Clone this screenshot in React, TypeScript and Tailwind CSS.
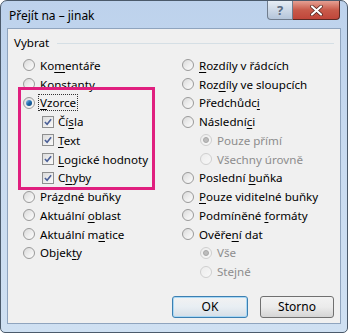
import React from "react";

type Item = {
  label: string;
  key?: number; // index of underlined letter
  kind: "radio" | "check";
  checked?: boolean;
  disabled?: boolean;
  indent?: boolean;
  focus?: boolean;
};

const leftItems: Item[] = [
  { label: "Komentáře", key: 2, kind: "radio" },
  { label: "Konstanty", kind: "radio" },
  { label: "Vzorce", key: 0, kind: "radio", checked: true, focus: true },
  { label: "Čísla", key: 2, kind: "check", checked: true, indent: true },
  { label: "Text", key: 0, kind: "check", checked: true, indent: true },
  { label: "Logické hodnoty", key: 0, kind: "check", checked: true, indent: true },
  { label: "Chyby", key: 1, kind: "check", checked: true, indent: true },
  { label: "Prázdné buňky", key: 3, kind: "radio" },
  { label: "Aktuální oblast", key: 9, kind: "radio" },
  { label: "Aktuální matice", key: 10, kind: "radio" },
  { label: "Objekty", key: 5, kind: "radio" },
];

const rightItems: Item[] = [
  { label: "Rozdíly v řádcích", key: 0, kind: "radio" },
  { label: "Rozdíly ve sloupcích", key: 3, kind: "radio" },
  { label: "Předchůdci", key: 9, kind: "radio" },
  { label: "Následníci", key: 8, kind: "radio" },
  { label: "Pouze přímí", kind: "radio", checked: true, disabled: true, indent: true },
  { label: "Všechny úrovně", kind: "radio", disabled: true, indent: true },
  { label: "Poslední buňka", key: 9, kind: "radio" },
  { label: "Pouze viditelné buňky", key: 0, kind: "radio" },
  { label: "Podmíněné formáty", key: 10, kind: "radio" },
  { label: "Ověření dat", key: 5, kind: "radio" },
  { label: "Vše", kind: "radio", checked: true, disabled: true, indent: true },
  { label: "Stejné", kind: "radio", disabled: true, indent: true },
];

function Label({ text, k }: { text: string; k?: number }) {
  if (k === undefined) return <>{text}</>;
  return (
    <>
      {text.slice(0, k)}
      <span className="underline underline-offset-2">{text[k]}</span>
      {text.slice(k + 1)}
    </>
  );
}

function Radio({ checked, disabled }: { checked?: boolean; disabled?: boolean }) {
  return (
    <span
      className={`flex items-center justify-center w-[12px] h-[12px] rounded-full border ${
        disabled
          ? "border-[#cfcfcf] bg-gradient-to-br from-[#ececec] to-[#f8f8f8]"
          : "border-[#9a9a9a] bg-gradient-to-br from-[#d9d9d9] via-[#ededed] to-[#fdfdfd]"
      }`}
    >
      {checked && (
        <span
          className={`w-[6px] h-[6px] rounded-full ${
            disabled
              ? "bg-[#bdbdbd] border border-[#a8a8a8]"
              : "bg-gradient-to-br from-[#8fc6f0] via-[#1d6cae] to-[#0b3f73]"
          }`}
        />
      )}
    </span>
  );
}

function Check() {
  return (
    <span className="flex items-center justify-center w-[12px] h-[12px] border border-[#8e8f8f] bg-gradient-to-br from-[#dcdcdc] to-[#fafafa]">
      <svg width="8" height="8" viewBox="0 0 9 9">
        <path d="M1 4.5 L3.5 7 L8 1.5" fill="none" stroke="#4a5f97" strokeWidth="1.8" />
      </svg>
    </span>
  );
}

function Row({ item, col }: { item: Item; col: "left" | "right" }) {
  const pad = col === "left" ? (item.indent ? "pl-[34px]" : "pl-[15px]") : item.indent ? "pl-[24px]" : "pl-[6px]";
  return (
    <div className={`flex items-center h-[18.75px] ${pad}`}>
      {item.kind === "radio" ? <Radio checked={item.checked} disabled={item.disabled} /> : <Check />}
      <span
        className={`${item.kind === "check" ? "ml-[3px]" : "ml-[4px]"} px-[1px] leading-[15px] ${
          item.disabled ? "text-[#8d8d8d]" : "text-[#000]"
        } ${item.focus ? "outline outline-1 outline-dotted outline-[#333]" : ""}`}
      >
        <Label text={item.label} k={item.key} />
      </span>
    </div>
  );
}

export default function App() {
  return (
    <div
      className="w-[348px] h-[333px] overflow-hidden rounded-t-[7px] rounded-b-[5px] border border-[#4b5a6b] bg-gradient-to-b from-[#bdd2ec] via-[#c9dbf0] to-[#cfe0f2] flex flex-col text-[11.6px]"
      style={{ fontFamily: '"Noto Sans", "Open Sans", sans-serif' }}
    >
      {/* title bar */}
      <div className="h-[27px] flex items-start pl-[8px] pr-[7px] shrink-0">
        <span className="flex-1 text-[12px] text-black mt-[7px] leading-[16px]">Přejít na – jinak</span>
        <span className="flex w-[26px] h-[19px] rounded-bl-[4px] border border-t-0 border-[#707d8d] bg-gradient-to-b from-[#e6edf5] to-[#b4c5da] items-center justify-center text-[13px] font-bold leading-none text-[#5a6a80]">
          ?
        </span>
        <span className="flex w-[47px] h-[19px] rounded-br-[4px] border border-t-0 border-l-0 border-[#5e2a24] bg-gradient-to-b from-[#e5a093] via-[#c85a4a] to-[#c0463a] items-center justify-center">
          <svg width="13" height="11" viewBox="0 0 13 11">
            <path d="M2 1.5 L11 9.5 M11 1.5 L2 9.5" stroke="#4a2019" strokeWidth="3.6" strokeLinecap="round" />
            <path d="M2 1.5 L11 9.5 M11 1.5 L2 9.5" stroke="#fff" strokeWidth="2.2" strokeLinecap="round" />
          </svg>
        </span>
      </div>

      {/* content */}
      <div className="relative mx-[6px] mb-[8px] flex-1 border border-[#8fa4be] bg-[#f0f0f0] flex flex-col">
        <div className="flex items-center pl-[6px] pr-[6px] mt-[6px] h-[16px]">
          <span className="text-black">Vybrat</span>
          <div className="ml-[8px] flex-1 h-px bg-[#d5dfe5]" />
        </div>

        <div className="flex mt-[5px]">
          <div className="w-[168px] flex flex-col">
            {leftItems.map((it) => (
              <Row key={it.label} item={it} col="left" />
            ))}
          </div>
          <div className="flex-1 flex flex-col">
            {rightItems.map((it) => (
              <Row key={it.label} item={it} col="right" />
            ))}
          </div>
        </div>

        <div className="flex justify-end gap-[12px] pr-[6px] mt-auto mb-[5px]">
          <button className="w-[76px] h-[22px] rounded-[3px] border border-[#3c7fb1] bg-gradient-to-b from-[#f2f2f2] via-[#e8eef3] to-[#d6dee6] shadow-[inset_0_0_0_1px_#a9d8f5] text-black text-[12px]">
            OK
          </button>
          <button className="w-[74px] h-[22px] rounded-[3px] border border-[#707070] bg-gradient-to-b from-[#f2f2f2] via-[#ebebeb] to-[#d5d5d5] text-black text-[12px]">
            Storno
          </button>
        </div>

        {/* highlight box */}
        <div className="absolute left-[10px] top-[58px] w-[137px] h-[103px] border-[3px] border-[#e01f7f] pointer-events-none" />
      </div>
    </div>
  );
}
